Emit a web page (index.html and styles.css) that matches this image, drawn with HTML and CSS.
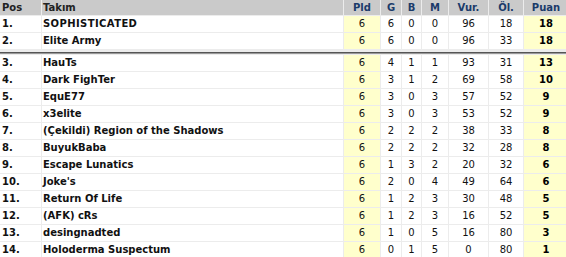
FILE: index.html
```html
<!DOCTYPE html>
<html lang="tr">
<head>
<meta charset="utf-8">
<title>Puan Durumu</title>
<link rel="stylesheet" href="styles.css">
</head>
<body>
<div class="standings">
  <div class="row head">
    <div class="c pos">Pos</div><div class="c team">Takım</div><div class="c n">Pld</div><div class="c n">G</div><div class="c n">B</div><div class="c n">M</div><div class="c n">Vur.</div><div class="c n">Öl.</div><div class="c n">Puan</div>
  </div>
  <div class="row"><div class="c pos">1.</div><div class="c team caps">SOPHISTICATED</div><div class="c n hl">6</div><div class="c n">6</div><div class="c n">0</div><div class="c n">0</div><div class="c n">96</div><div class="c n">18</div><div class="c n hl pts">18</div></div>
  <div class="row"><div class="c pos">2.</div><div class="c team">Elite Army</div><div class="c n hl">6</div><div class="c n">6</div><div class="c n">0</div><div class="c n">0</div><div class="c n">96</div><div class="c n">33</div><div class="c n hl pts">18</div></div>
  <div class="sep"></div>
  <div class="row"><div class="c pos">3.</div><div class="c team">HauTs</div><div class="c n hl">6</div><div class="c n">4</div><div class="c n">1</div><div class="c n">1</div><div class="c n">93</div><div class="c n">31</div><div class="c n hl pts">13</div></div>
  <div class="row"><div class="c pos">4.</div><div class="c team">Dark FighTer</div><div class="c n hl">6</div><div class="c n">3</div><div class="c n">1</div><div class="c n">2</div><div class="c n">69</div><div class="c n">58</div><div class="c n hl pts">10</div></div>
  <div class="row"><div class="c pos">5.</div><div class="c team">EquE77</div><div class="c n hl">6</div><div class="c n">3</div><div class="c n">0</div><div class="c n">3</div><div class="c n">57</div><div class="c n">52</div><div class="c n hl pts">9</div></div>
  <div class="row"><div class="c pos">6.</div><div class="c team">x3elite</div><div class="c n hl">6</div><div class="c n">3</div><div class="c n">0</div><div class="c n">3</div><div class="c n">53</div><div class="c n">52</div><div class="c n hl pts">9</div></div>
  <div class="row"><div class="c pos">7.</div><div class="c team">(Çekildi) Region of the Shadows</div><div class="c n hl">6</div><div class="c n">2</div><div class="c n">2</div><div class="c n">2</div><div class="c n">38</div><div class="c n">33</div><div class="c n hl pts">8</div></div>
  <div class="row"><div class="c pos">8.</div><div class="c team">BuyukBaba</div><div class="c n hl">6</div><div class="c n">2</div><div class="c n">2</div><div class="c n">2</div><div class="c n">32</div><div class="c n">28</div><div class="c n hl pts">8</div></div>
  <div class="row"><div class="c pos">9.</div><div class="c team">Escape Lunatics</div><div class="c n hl">6</div><div class="c n">1</div><div class="c n">3</div><div class="c n">2</div><div class="c n">20</div><div class="c n">32</div><div class="c n hl pts">6</div></div>
  <div class="row"><div class="c pos">10.</div><div class="c team">Joke's</div><div class="c n hl">6</div><div class="c n">2</div><div class="c n">0</div><div class="c n">4</div><div class="c n">49</div><div class="c n">64</div><div class="c n hl pts">6</div></div>
  <div class="row"><div class="c pos">11.</div><div class="c team">Return Of Life</div><div class="c n hl">6</div><div class="c n">1</div><div class="c n">2</div><div class="c n">3</div><div class="c n">30</div><div class="c n">48</div><div class="c n hl pts">5</div></div>
  <div class="row"><div class="c pos">12.</div><div class="c team">(AFK) cRs</div><div class="c n hl">6</div><div class="c n">1</div><div class="c n">2</div><div class="c n">3</div><div class="c n">16</div><div class="c n">52</div><div class="c n hl pts">5</div></div>
  <div class="row"><div class="c pos">13.</div><div class="c team">desingnadted</div><div class="c n hl">6</div><div class="c n">1</div><div class="c n">0</div><div class="c n">5</div><div class="c n">16</div><div class="c n">80</div><div class="c n hl pts">3</div></div>
  <div class="row"><div class="c pos">14.</div><div class="c team">Holoderma Suspectum</div><div class="c n hl">6</div><div class="c n">0</div><div class="c n">1</div><div class="c n">5</div><div class="c n">0</div><div class="c n">80</div><div class="c n hl pts">1</div></div>
</div>
</body>
</html>
```
FILE: styles.css
```css
html, body {
  margin: 0;
  padding: 0;
  background: #ffffff;
  overflow: hidden;
}
.standings {
  display: grid;
  grid-template-columns: 41px 301px 36px 20px 19px 26px 39px 34px 44px;
  grid-template-rows: 15px 16px 16px 4px repeat(12, 16px);
  gap: 1px;
  width: 568px;
  background: #ececec;
  font-family: "DejaVu Sans", Verdana, sans-serif;
  font-size: 10px;
  color: #111;
}
.row {
  display: contents;
}
.c {
  background: #ffffff;
  line-height: 16px;
  white-space: nowrap;
  overflow: hidden;
}
.head .c {
  background: #cacaca;
  font-weight: bold;
  color: #1b3b6a;
  line-height: 15px;
}
.head .pos, .head .team {
  color: #222;
}
.pos {
  padding-left: 2px;
  font-weight: bold;
}
.team {
  padding-left: 1px;
  font-weight: bold;
}
.caps {
  letter-spacing: 0.4px;
}
.n {
  text-align: center;
}
.hl {
  background: #ffffcc;
}
.pts {
  font-weight: bold;
  color: #000;
}
.sep {
  grid-column: 1 / -1;
  background: linear-gradient(#ececec 0 2px, #555 2px 3px, #999 3px 4px);
}
```
